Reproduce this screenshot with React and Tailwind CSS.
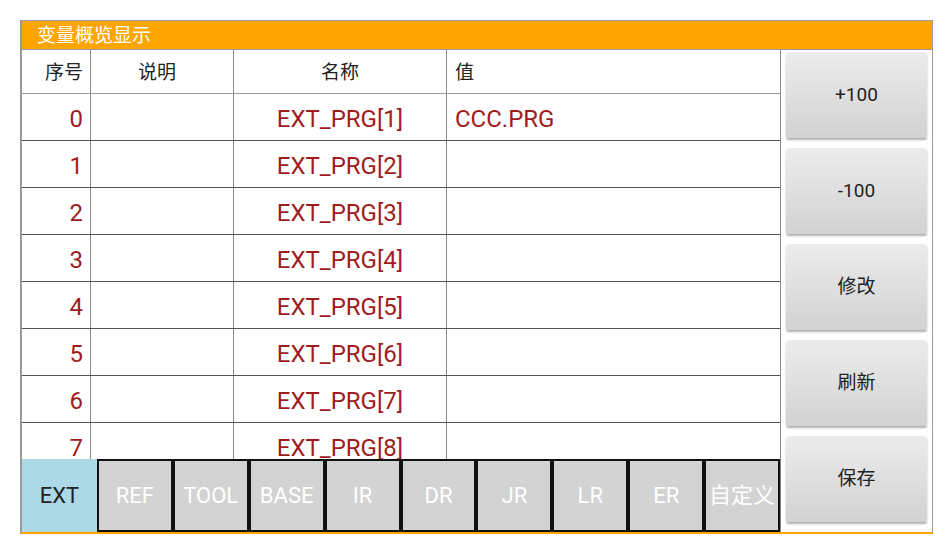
const rows = [
  { id: 0, name: 'EXT_PRG[1]', value: 'CCC.PRG' },
  { id: 1, name: 'EXT_PRG[2]', value: '' },
  { id: 2, name: 'EXT_PRG[3]', value: '' },
  { id: 3, name: 'EXT_PRG[4]', value: '' },
  { id: 4, name: 'EXT_PRG[5]', value: '' },
  { id: 5, name: 'EXT_PRG[6]', value: '' },
  { id: 6, name: 'EXT_PRG[7]', value: '' },
  { id: 7, name: 'EXT_PRG[8]', value: '' },
]

const tabs = ['REF', 'TOOL', 'BASE', 'IR', 'DR', 'JR', 'LR', 'ER', '自定义']
const buttons = ['+100', '-100', '修改', '刷新', '保存']

export default function App() {
  return (
    <div className="w-[951px] h-[541px] bg-white pt-[20px] pl-[20px] font-['Roboto','Noto_Sans_CJK_SC',sans-serif]">
      <div className="w-[913px] border-t border-l-2 border-r border-[#9a9a9a] border-b-2 border-b-[#ffa500] flex flex-col">
        <div className="h-[29px] bg-[#ffa500] text-white text-[19px] leading-[29px] pl-[15px] border-b border-[#9a9a9a]">
          变量概览显示
        </div>
        <div className="flex">
          <div className="w-[759px] flex flex-col border-r border-[#888]">
            <div className="h-[409px] overflow-hidden">
              <div className="flex h-[44px] border-b border-[#9a9a9a] text-[19px] text-[#222] items-center">
                <div className="w-[69px] h-full border-r border-[#888] flex items-center justify-end pr-[7px] pt-[3px]">序号</div>
                <div className="w-[143px] h-full border-r border-[#888] flex items-center justify-center pr-[10px] pt-[3px]">说明</div>
                <div className="w-[213px] h-full border-r border-[#888] flex items-center justify-center pt-[3px]">名称</div>
                <div className="flex-1 h-full flex items-center pl-[8px] pt-[3px]">值</div>
              </div>
              {rows.map(r => (
                <div key={r.id} className="flex h-[47px] border-b border-[#555] text-[24px] text-[#a01c1c]">
                  <div className="w-[69px] h-full border-r border-[#888] flex items-center justify-end pr-[7px] pt-[3px]">{r.id}</div>
                  <div className="w-[143px] h-full border-r border-[#888]"></div>
                  <div className="w-[213px] h-full border-r border-[#888] flex items-center justify-center pt-[3px]">{r.name}</div>
                  <div className="flex-1 h-full flex items-center pl-[8px] pt-[3px]">{r.value}</div>
                </div>
              ))}
            </div>
            <div className="h-[73px] flex">
              <div className="w-[75px] h-full bg-[#add8e6] text-[#222] text-[22px] flex items-center justify-center">EXT</div>
              {tabs.map(t => (
                <div key={t} className="w-[76px] h-full bg-[#d3d3d3] border-2 border-[#111] text-white text-[22px] flex items-center justify-center whitespace-nowrap">
                  {t}
                </div>
              ))}
            </div>
          </div>
          <div className="flex-1 flex flex-col gap-[10px] pt-[2px] pl-[5px] pr-[5px]">
            {buttons.map(b => (
              <div key={b} className="h-[86px] rounded-[3px] bg-gradient-to-b from-[#ececec] to-[#d2d2d2] shadow-[0_2px_2px_rgba(0,0,0,0.3)] flex items-center justify-center text-[19px] text-[#222] pt-[1px]">
                {b}
              </div>
            ))}
          </div>
        </div>
      </div>
    </div>
  )
}
